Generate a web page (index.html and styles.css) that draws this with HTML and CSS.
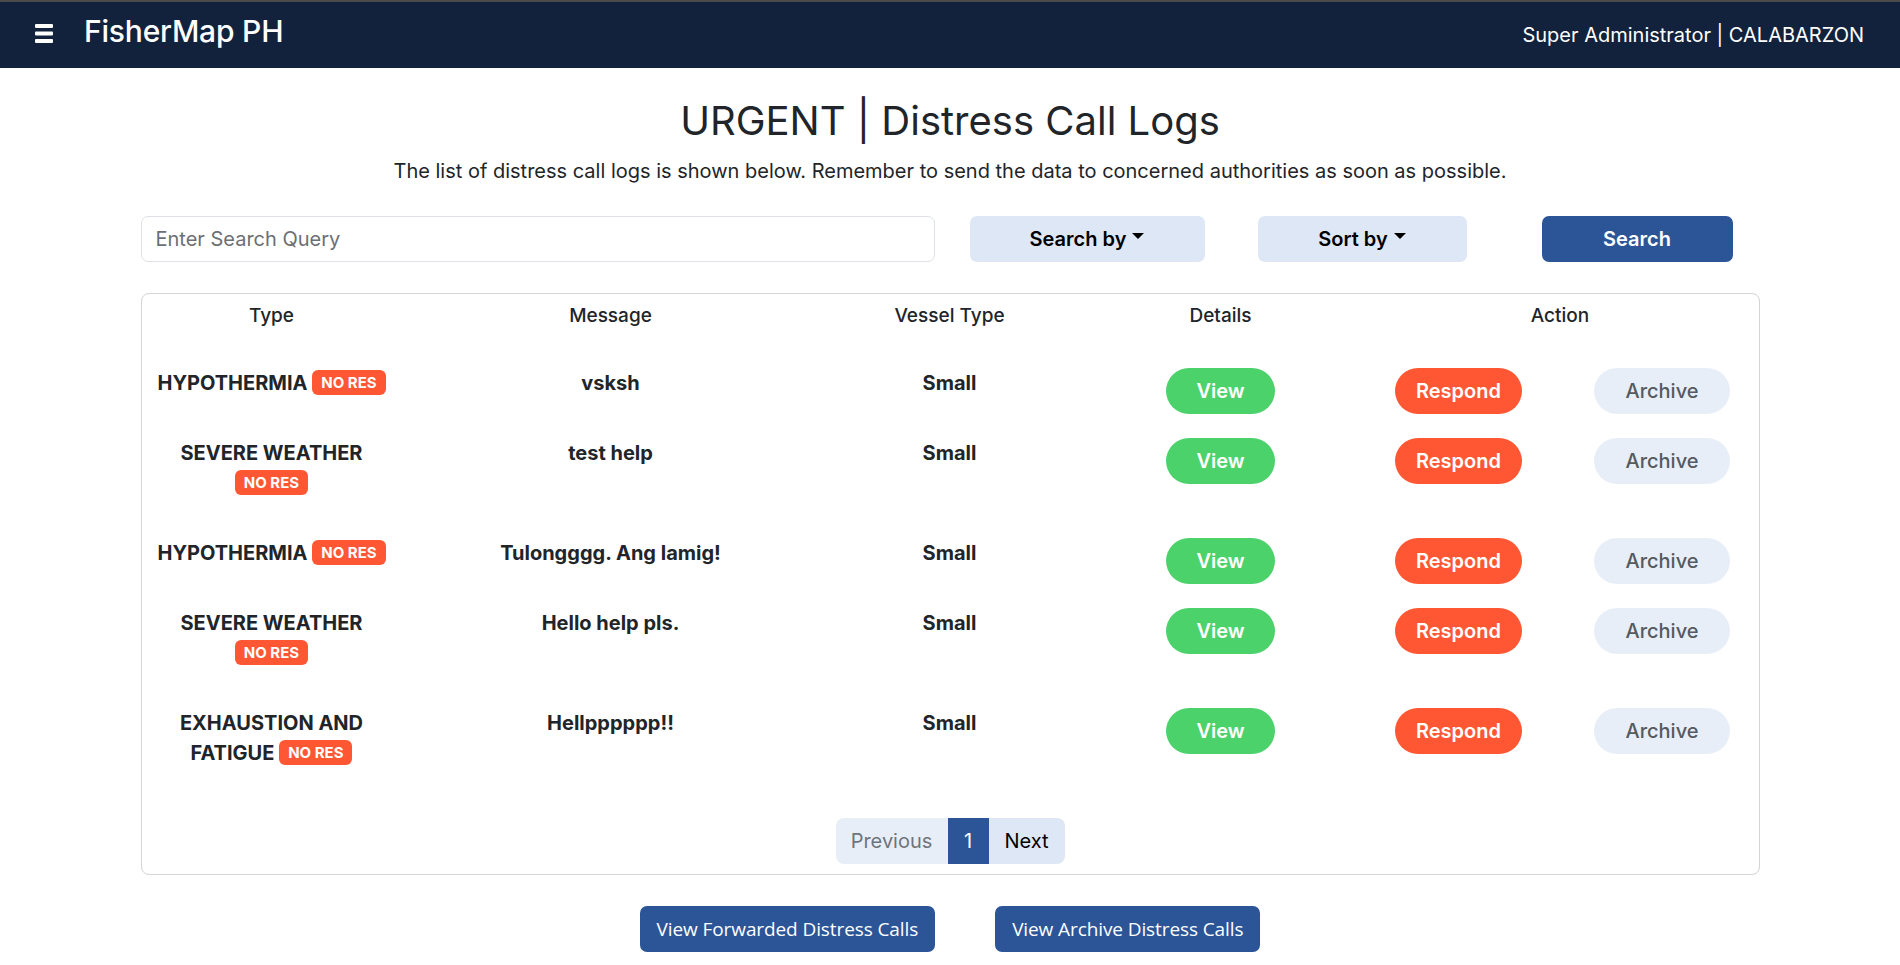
FILE: index.html
```html
<!DOCTYPE html>
<html lang="en">
<head>
<meta charset="utf-8">
<title>FisherMap PH - Distress Call Logs</title>
<link rel="stylesheet" href="styles.css">
</head>
<body>
<nav class="navbar">
  <div class="nav-left">
    <button class="hamburger" aria-label="Menu">
      <svg width="18" height="19" viewBox="0 0 18 19"><rect x="0" y="0" width="18" height="4" rx="1"/><rect x="0" y="7.5" width="18" height="4" rx="1"/><rect x="0" y="15" width="18" height="4" rx="1"/></svg>
    </button>
    <span class="brand">FisherMap PH</span>
  </div>
  <div class="nav-right">Super Administrator | CALABARZON</div>
</nav>

<main class="content">
  <h1 class="title">URGENT | Distress Call Logs</h1>
  <p class="subtitle">The list of distress call logs is shown below. Remember to send the data to concerned authorities as soon as possible.</p>

  <div class="toolbar">
    <input class="search-input" type="text" placeholder="Enter Search Query">
    <button class="btn-filter">Search by<span class="caret"></span></button>
    <button class="btn-filter sort">Sort by<span class="caret"></span></button>
    <button class="btn-search">Search</button>
  </div>

  <div class="card">
    <table class="logs">
      <colgroup>
        <col class="c-type"><col class="c-msg"><col class="c-vessel"><col class="c-details"><col class="c-respond"><col class="c-archive">
      </colgroup>
      <thead>
        <tr><th>Type</th><th>Message</th><th>Vessel Type</th><th>Details</th><th colspan="2">Action</th></tr>
      </thead>
      <tbody>
        <tr>
          <td><p class="cell-text">HYPOTHERMIA <span class="badge">NO RES</span></p></td>
          <td><p class="cell-text">vsksh</p></td>
          <td><p class="cell-text">Small</p></td>
          <td><button class="pill view">View</button></td>
          <td><button class="pill respond">Respond</button></td>
          <td><button class="pill archive">Archive</button></td>
        </tr>
        <tr>
          <td><p class="cell-text">SEVERE WEATHER<br><span class="badge">NO RES</span></p></td>
          <td><p class="cell-text">test help</p></td>
          <td><p class="cell-text">Small</p></td>
          <td><button class="pill view">View</button></td>
          <td><button class="pill respond">Respond</button></td>
          <td><button class="pill archive">Archive</button></td>
        </tr>
        <tr>
          <td><p class="cell-text">HYPOTHERMIA <span class="badge">NO RES</span></p></td>
          <td><p class="cell-text">Tulongggg. Ang lamig!</p></td>
          <td><p class="cell-text">Small</p></td>
          <td><button class="pill view">View</button></td>
          <td><button class="pill respond">Respond</button></td>
          <td><button class="pill archive">Archive</button></td>
        </tr>
        <tr>
          <td><p class="cell-text">SEVERE WEATHER<br><span class="badge">NO RES</span></p></td>
          <td><p class="cell-text">Hello help pls.</p></td>
          <td><p class="cell-text">Small</p></td>
          <td><button class="pill view">View</button></td>
          <td><button class="pill respond">Respond</button></td>
          <td><button class="pill archive">Archive</button></td>
        </tr>
        <tr>
          <td><p class="cell-text">EXHAUSTION AND<br>FATIGUE <span class="badge">NO RES</span></p></td>
          <td><p class="cell-text">Hellpppppp!!</p></td>
          <td><p class="cell-text">Small</p></td>
          <td><button class="pill view">View</button></td>
          <td><button class="pill respond">Respond</button></td>
          <td><button class="pill archive">Archive</button></td>
        </tr>
      </tbody>
    </table>

    <nav class="pagination">
      <span class="page-item prev">Previous</span>
      <span class="page-item current">1</span>
      <span class="page-item next">Next</span>
    </nav>
  </div>

  <div class="footer-actions">
    <button class="btn-link-blue">View Forwarded Distress Calls</button>
    <button class="btn-link-blue">View Archive Distress Calls</button>
  </div>
</main>
</body>
</html>
```

FILE: styles.css
```css
* { box-sizing: border-box; }

html, body {
  margin: 0;
  padding: 0;
  background: #ffffff;
}

body {
  font-family: Inter, "Noto Sans", sans-serif;
  font-size: 20px;
  line-height: 1.5;
  color: #212529;
}

button {
  font-family: inherit;
  border: none;
  cursor: pointer;
}

/* ---------- Navbar ---------- */
.navbar {
  height: 68px;
  background: #12223d;
  border-top: 2px solid #4a4a4a;
  display: flex;
  align-items: center;
  justify-content: space-between;
  padding: 0 36px 0 35px;
  color: #ffffff;
}

.nav-left {
  display: flex;
  align-items: center;
  gap: 31px;
  margin-top: -8px;
}

.hamburger {
  background: transparent;
  padding: 0;
  display: flex;
  margin-top: 4px;
}

.hamburger svg { fill: #ffffff; display: block; }

.brand {
  font-size: 30px;
  font-weight: 500;
  line-height: 1.2;
  letter-spacing: -0.2px;
}

.nav-right {
  font-size: 20px;
  font-weight: 400;
  line-height: 1.2;
}

/* ---------- Header text ---------- */
.content {
  width: 1619px;
  margin: 0 auto;
}

.title {
  margin: 29px 0 11px;
  text-align: center;
  font-size: 40px;
  font-weight: 400;
  line-height: 1.2;
  color: #212529;
}

.subtitle {
  margin: 0 0 30px;
  text-align: center;
  font-size: 20px;
  line-height: 1.5;
}

/* ---------- Toolbar ---------- */
.toolbar {
  display: grid;
  grid-template-columns: 809px 275px 275px 275px;
  align-items: center;
  margin-bottom: 31px;
}

.search-input {
  width: 794px;
  height: 46px;
  border: 1px solid #dee2e6;
  border-radius: 7px;
  padding: 6px 14px;
  font-family: inherit;
  font-size: 20px;
  color: #212529;
  outline: none;
}

.search-input::placeholder { color: #6c6f73; }

.btn-filter {
  justify-self: center;
  width: 235px;
  height: 46px;
  background: #dee7f5;
  border-radius: 7px;
  font-size: 20px;
  font-weight: 600;
  color: #000000;
  display: inline-flex;
  align-items: center;
  justify-content: center;
}

.btn-filter.sort { width: 209px; }

.caret {
  display: inline-block;
  margin-left: 6px;
  width: 0;
  height: 0;
  border-left: 6px solid transparent;
  border-right: 6px solid transparent;
  border-top: 6px solid #000000;
  position: relative;
  top: -3px;
}

.btn-search {
  justify-self: center;
  width: 191px;
  height: 46px;
  background: #2b5597;
  color: #ffffff;
  border-radius: 7px;
  font-size: 20px;
  font-weight: 600;
}

/* ---------- Card & table ---------- */
.card {
  border: 1px solid #d4d4d4;
  border-radius: 8px;
  padding-bottom: 10px;
}

.logs {
  width: 100%;
  border-collapse: collapse;
  table-layout: fixed;
}

.c-type { width: 260px; }
.c-msg { width: 418px; }
.c-vessel { width: 260px; }
.c-details { width: 282px; }
.c-respond { width: 194px; }
.c-archive { width: 203px; }

.logs th {
  font-weight: 500;
  font-size: 19px;
  line-height: 30px;
  padding: 7px 0 25px;
  text-align: center;
  color: #212529;
}

.logs td {
  padding: 12px 0;
  vertical-align: top;
  text-align: center;
}

.cell-text {
  margin: 0 0 16px;
  font-weight: 700;
  font-size: 20px;
  line-height: 30px;
  color: #212529;
}

.badge {
  display: inline-block;
  background: #ff5733;
  color: #ffffff;
  font-size: 15px;
  font-weight: 700;
  line-height: 1;
  padding: 5px 9px;
  border-radius: 6px;
  vertical-align: 2px;
}

.pill {
  height: 46px;
  border-radius: 23px;
  font-size: 20px;
  font-weight: 600;
  color: #ffffff;
}

.pill.view { width: 109px; background: #4cd26b; }
.pill.respond { width: 127px; background: #ff5733; }
.pill.archive {
  width: 136px;
  background: #e8eef8;
  color: #555a60;
  font-weight: 500;
  margin-left: 10px;
}

/* ---------- Pagination ---------- */
.pagination {
  display: flex;
  justify-content: center;
  margin-top: 22px;
}

.page-item {
  height: 46px;
  display: inline-flex;
  align-items: center;
  justify-content: center;
  font-size: 20px;
}

.page-item.prev {
  width: 112px;
  background: #e8eef8;
  color: #6c757d;
  border-radius: 8px 0 0 8px;
}

.page-item.current {
  width: 41px;
  background: #2b5597;
  color: #ffffff;
}

.page-item.next {
  width: 76px;
  background: #dee7f5;
  color: #000000;
  border-radius: 0 8px 8px 0;
}

/* ---------- Footer buttons ---------- */
.footer-actions {
  display: flex;
  justify-content: center;
  gap: 60px;
  margin: 31px 0 13px;
}

.btn-link-blue {
  height: 46px;
  padding: 0 17px;
  background: #2b5597;
  color: #ffffff;
  border-radius: 7px;
  font-family: "Open Sans", "Noto Sans", sans-serif;
  font-size: 19px;
  font-weight: 400;
  letter-spacing: -0.1px;
}
```
